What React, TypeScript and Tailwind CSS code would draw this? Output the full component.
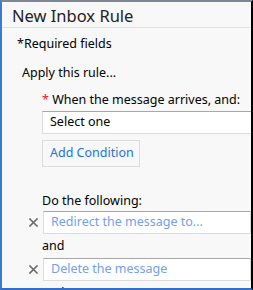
import React from "react";

const XIcon = () => (
  <svg width="9" height="9" viewBox="0 0 9 9" className="shrink-0">
    <path d="M1 1 L8 8 M8 1 L1 8" stroke="#6e6e6e" strokeWidth="1.6" strokeLinecap="square" />
  </svg>
);

export default function App() {
  return (
    <div
      className="w-[253px] h-[290px] overflow-hidden bg-[#f8f8f8] border-t-2 border-t-[#7d8796] border-l-2 border-l-[#3a7bd5] border-r-2 border-r-black border-b-2 border-b-[#2f6fd0] text-[12.5px] text-black"
      style={{ fontFamily: '"Segoe UI", "Noto Sans", sans-serif' }}
    >
      <div className="h-[26px] flex items-center pt-[4px] pl-[10px] text-[16.5px] leading-none text-[#222] border-b border-[#e0e0e0]">
        New Inbox Rule
      </div>
      <div className="pl-[15px] pt-[6px] h-[20px] leading-[20px]">*Required fields</div>
      <div className="pl-[20px] mt-[15px] h-[20px] leading-[20px]">Apply this rule...</div>
      <div className="pl-[40px] pr-0">
        <div className="mt-[7px] h-[20px] leading-[20px]">
          <span className="text-[#e02020]">*</span> When the message arrives, and:
        </div>
        <div className="mt-[1px] h-[23px] w-[260px] bg-white border border-[#dcdcdc] border-t-[#a8a8a8] flex items-center pl-[7px]">
          Select one
        </div>
        <div className="mt-[6px] h-[27px] w-[98px] border border-[#dcdcdc] flex items-center pl-[7px] text-[#2572d9]">
          Add Condition
        </div>
        <div className="mt-[24px] h-[20px] leading-[20px]">Do the following:</div>
      </div>
      <div className="flex items-center pl-[27px] gap-[5px]">
        <XIcon />
        <div className="h-[23px] w-[260px] bg-white border border-[#dcdcdc] border-t-[#a8a8a8] flex items-center pl-[7px] text-[#72a0f2]">
          Redirect the message to...
        </div>
      </div>
      <div className="pl-[40px] h-[24px] leading-[24px]">and</div>
      <div className="flex items-center pl-[27px] gap-[5px]">
        <XIcon />
        <div className="h-[23px] w-[260px] bg-white border border-[#dcdcdc] border-t-[#a8a8a8] flex items-center pl-[7px] text-[#72a0f2]">
          Delete the message
        </div>
      </div>
      <div className="pl-[40px] mt-[2px] h-[20px] leading-[20px]">and</div>
    </div>
  );
}
